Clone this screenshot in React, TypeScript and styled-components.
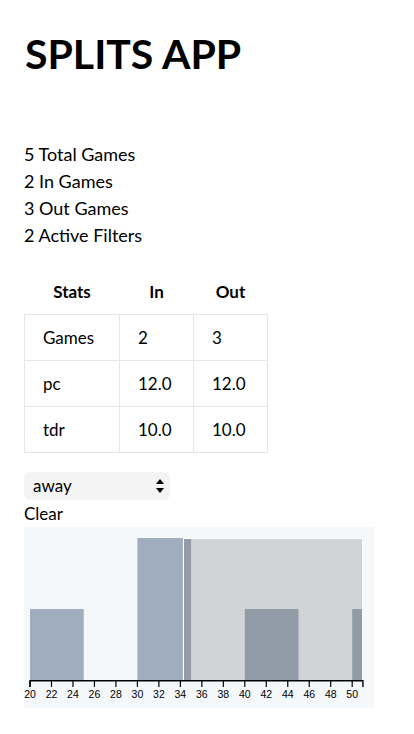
import React from "react";
import styled, { createGlobalStyle } from "styled-components";

const Global = createGlobalStyle`
  html, body { margin: 0; padding: 0; background: #ffffff; }
  body { font-family: Lato, "Noto Sans", sans-serif; color: #000000; }
`;

const Page = styled.div`
  padding: 29px 24px 20px 24px;
  display: flex;
  flex-direction: column;
  align-items: flex-start;
`;

const Title = styled.h1`
  margin: 0 0 0 1px;
  font-size: 41px;
  line-height: 50px;
  font-weight: 700;
  letter-spacing: 0;
`;

const Summary = styled.div`
  margin-top: 62px;
  display: flex;
  flex-direction: column;
`;

const SummaryLine = styled.div`
  font-size: 18px;
  line-height: 27px;
`;

const Table = styled.table`
  margin-top: 19px;
  border-collapse: collapse;
  font-size: 17px;
`;

const Th = styled.th`
  height: 46px;
  padding: 0;
  font-weight: 700;
  text-align: center;
`;

const Td = styled.td<{ $w: number }>`
  width: ${(p) => p.$w}px;
  height: 46px;
  padding: 0 0 0 18px;
  box-sizing: border-box;
  border: 1px solid #e6e6e8;
  text-align: left;
`;

const SelectBox = styled.div`
  position: relative;
  margin-top: 19px;
  width: 146px;
  height: 28px;
  border-radius: 6px;
  background: #f4f4f5;
  display: flex;
  align-items: center;
  justify-content: space-between;
  padding: 0 4px 0 9px;
  box-sizing: border-box;
  font-size: 17px;
`;

const SelectText = styled.span`
  line-height: 28px;
`;

const Arrows = styled.svg`
  width: 10px;
  height: 16px;
  margin-right: 1px;
`;

const ClearButton = styled.button`
  border: none;
  background: none;
  padding: 0;
  margin: 0;
  font-family: Lato, "Noto Sans", sans-serif;
  font-size: 17px;
  line-height: 27px;
  color: #000000;
  cursor: pointer;
`;

const ChartWrap = styled.div`
  width: 350px;
  height: 181px;
  background: #f5f8fb;
`;

const bins = [
  { x0: 20, x1: 25, c: 1 },
  { x0: 30, x1: 35, c: 2 },
  { x0: 40, x1: 45, c: 1 },
  { x0: 50, x1: 55, c: 1 },
];

const sx = (v: number) => 6 + (Math.min(v, 51) - 20) * 10.74;
const base = 153;
const unit = 71;

function Histogram() {
  const ticks: number[] = [];
  for (let t = 20; t <= 50; t += 2) ticks.push(t);
  return (
    <ChartWrap>
      <svg width="350" height="181" viewBox="0 0 350 181">
        {bins.map((b) => (
          <rect
            key={b.x0}
            x={sx(b.x0)}
            y={base - b.c * unit}
            width={sx(b.x1) - sx(b.x0)}
            height={b.c * unit}
            fill="#a0adbe"
          />
        ))}
        <rect
          x={159.5}
          y={11.5}
          width={179}
          height={142}
          fill="rgb(105,105,105)"
          fillOpacity={0.25}
          stroke="#ffffff"
          strokeWidth={1}
          shapeRendering="crispEdges"
        />
        <path
          d={`M${sx(20)},160V153.8H${sx(51)}V160`}
          fill="none"
          stroke="#000"
          strokeWidth={1.4}
        />
        {ticks.map((t) => (
          <g key={t} transform={`translate(${sx(t)},0)`}>
            <line y1={154} y2={160} stroke="#000" strokeWidth={1.2} />
            <text
              y={171}
              textAnchor="middle"
              fontSize="10.5"
              fontFamily='"Liberation Sans", Arial, sans-serif'
              fill="#000"
            >
              {t}
            </text>
          </g>
        ))}
      </svg>
    </ChartWrap>
  );
}

const rows = [
  { name: "Games", a: "2", b: "3" },
  { name: "pc", a: "12.0", b: "12.0" },
  { name: "tdr", a: "10.0", b: "10.0" },
];

export default function App() {
  return (
    <>
      <Global />
      <Page>
        <Title>SPLITS APP</Title>
        <Summary>
          <SummaryLine>5 Total Games</SummaryLine>
          <SummaryLine>2 In Games</SummaryLine>
          <SummaryLine>3 Out Games</SummaryLine>
          <SummaryLine>2 Active Filters</SummaryLine>
        </Summary>
        <Table>
          <thead>
            <tr>
              <Th>Stats</Th>
              <Th>In</Th>
              <Th>Out</Th>
            </tr>
          </thead>
          <tbody>
            {rows.map((r) => (
              <tr key={r.name}>
                <Td $w={95}>{r.name}</Td>
                <Td $w={74}>{r.a}</Td>
                <Td $w={74}>{r.b}</Td>
              </tr>
            ))}
          </tbody>
        </Table>
        <SelectBox>
          <SelectText>away</SelectText>
          <Arrows viewBox="0 0 10 16">
            <path d="M1,6 L5,1 L9,6 Z" fill="#000" />
            <path d="M1,10 L9,10 L5,15 Z" fill="#000" />
          </Arrows>
        </SelectBox>
        <ClearButton>Clear</ClearButton>
        <Histogram />
      </Page>
    </>
  );
}
